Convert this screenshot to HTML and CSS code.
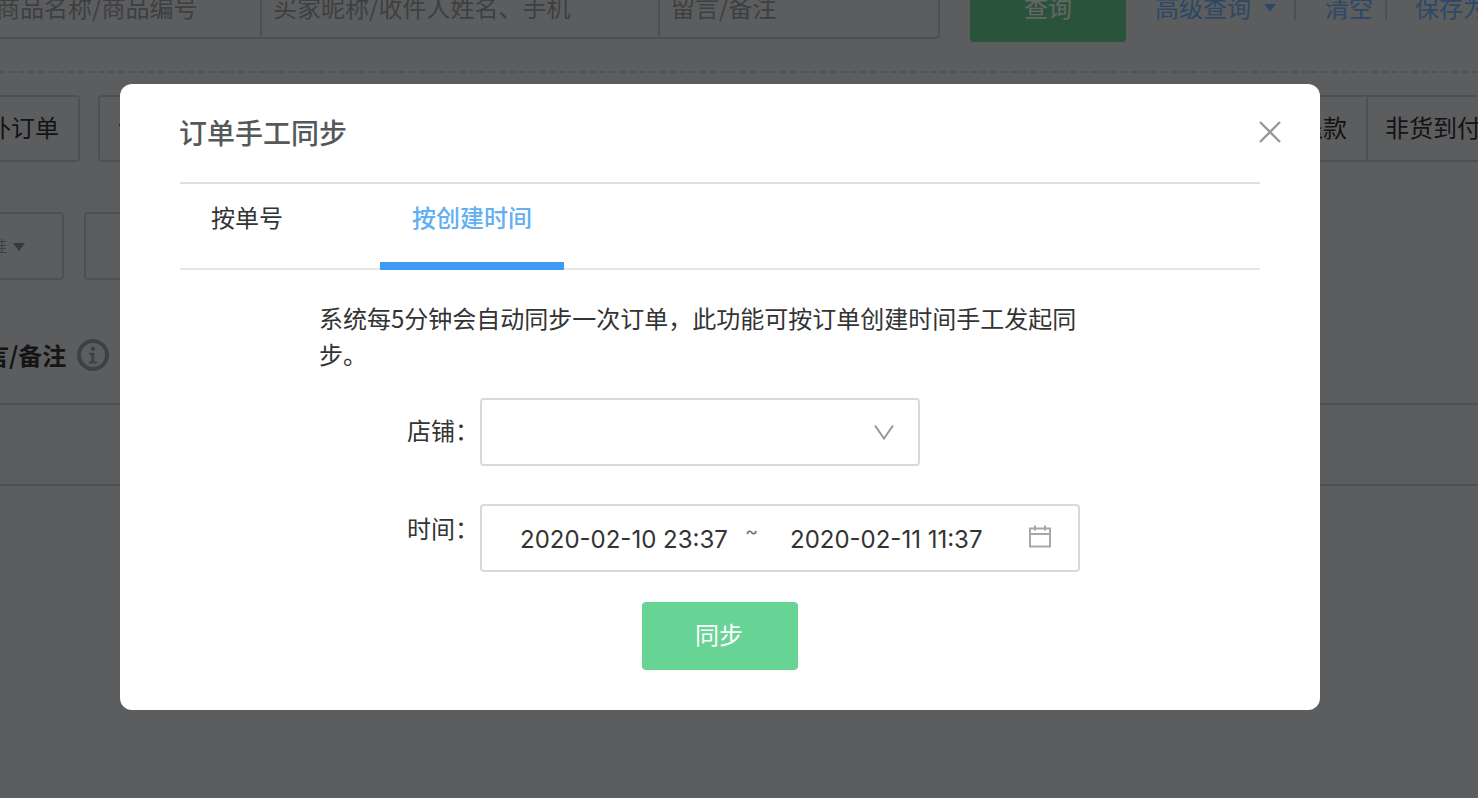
FILE: index.html
```
<!DOCTYPE html>
<html lang="zh-CN">
<head>
<meta charset="utf-8">
<title>订单手工同步</title>
<link rel="stylesheet" href="styles.css">
</head>
<body>
<div class="page">
  <div class="search-row">
    <div class="search-group">
      <div class="search-cell cell-a">商品名称/商品编号</div>
      <div class="search-cell cell-b">买家昵称/收件人姓名、手机</div>
      <div class="search-cell cell-c">留言/备注</div>
    </div>
    <div class="query-btn">查询</div>
    <div class="link-item link-first">高级查询<span class="caret"></span></div>
    <div class="link-item link-mid">清空</div>
    <div class="link-item link-last">保存为</div>
  </div>
  <div class="filter-row">
    <div class="chip chip-a">外订单</div>
    <div class="chip chip-b">订单</div>
    <div class="chip-tail">
      <div class="chip chip-c">退款</div>
      <div class="chip chip-d">非货到付款</div>
    </div>
  </div>
  <div class="select-row">
    <div class="sel sel-a">标准<span class="caret caret-dark"></span></div>
    <div class="sel sel-b"></div>
  </div>
  <div class="head-row">
    <span class="head-text">留言/备注</span>
    <svg class="info" width="32" height="32" viewBox="0 0 32 32"><circle cx="16" cy="16" r="14" fill="none" stroke="#98a2aa" stroke-width="4"/><circle cx="16" cy="9.8" r="2.2" fill="#98a2aa"/><path d="M12.4 13.8h5v8.6h2.4v2.2h-7.8v-2.2h2.4v-6.4h-2z" fill="#98a2aa"/></svg>
  </div>
  <div class="table-row"></div>

  <div class="overlay"></div>
  <div class="modal">
    <div class="modal-head">
      <h2 class="modal-title">订单手工同步</h2>
      <svg class="close" width="22" height="22" viewBox="0 0 22 22"><path d="M1 1l20 20M21 1L1 21" stroke="#97999b" stroke-width="2.4" fill="none"/></svg>
    </div>
    <div class="tabs">
      <div class="tab tab-first">按单号</div>
      <div class="tab tab-active">按创建时间</div>
    </div>
    <div class="modal-body">
      <p class="desc">系统每5分钟会自动同步一次订单，此功能可按订单创建时间手工发起同步。</p>
      <div class="form-row">
        <label class="form-label">店铺：</label>
        <div class="control control-select">
          <svg width="22" height="16" viewBox="0 0 22 16"><path d="M2 1.5L11 14.5 20 1.5" stroke="#97999b" stroke-width="2" fill="none"/></svg>
        </div>
      </div>
      <div class="form-row form-row-time">
        <label class="form-label label-time">时间：</label>
        <div class="control control-time">
          <span class="date date-start">2020-02-10 23:37</span>
          <span class="tilde">~</span>
          <span class="date">2020-02-11 11:37</span>
          <svg class="cal" width="24" height="24" viewBox="0 0 24 24"><path d="M2 4.5h20v18H2zM2 10h20M7 1.5v5M17 1.5v5" stroke="#a5a8aa" stroke-width="2" fill="none"/></svg>
        </div>
      </div>
      <div class="submit">同步</div>
    </div>
  </div>
</div>
</body>
</html>
```
FILE: styles.css
```
* { box-sizing: border-box; }
html, body { margin: 0; height: 100%; overflow: hidden; }
body { font-family: "Noto Sans CJK SC", "Liberation Sans", sans-serif; font-size: 24px; color: #333; background: #fff; }
.page { position: relative; width: 1478px; height: 798px; overflow: hidden; background: #e6e9eb; }

.search-row { display: flex; align-items: flex-start; height: 101px; margin-top: -28px; margin-left: -42px; width: 1600px; border-bottom: 2px dashed #c8ccd0; }
.search-group { display: flex; flex: none; width: 982px; height: 67px; border: 2px solid #c4c9cd; border-radius: 4px; color: #9a9ea2; line-height: 65px; }
.search-cell { padding-left: 11px; border-right: 2px solid #c4c9cd; white-space: nowrap; }
.cell-a { width: 302px; padding-left: 36px; }
.cell-b { width: 398px; }
.cell-c { flex: 1; border-right: 0; }
.query-btn { flex: none; width: 156px; height: 70px; margin-left: 30px; background: #67d395; color: #fff; border-radius: 4px; text-align: center; line-height: 70px; }
.link-item { flex: none; color: #6fb5ff; white-space: nowrap; line-height: 70px; position: relative; }
.link-first { margin-left: 29px; width: 141px; }
.link-mid { margin-left: 29px; width: 60px; }
.link-last { margin-left: 30px; }
.link-first::after, .link-mid::after { content: ""; position: absolute; top: 28px; height: 20px; width: 2px; background: #c4c9cd; right: 0; }
.link-mid::after { right: -2px; }
.caret { display: inline-block; width: 0; height: 0; margin-left: 13px; vertical-align: 5px; border-left: 6px solid transparent; border-right: 6px solid transparent; border-top: 8px solid currentColor; }

.filter-row { display: flex; margin-top: 22px; height: 67px; margin-left: -40px; width: 1558px; }
.chip { height: 67px; border: 2px solid #c4c9cd; border-radius: 4px; line-height: 59px; padding-left: 18px; white-space: nowrap; color: #333; overflow: hidden; }
.chip-a { width: 120px; padding-left: 25px; }
.chip-b { width: 300px; margin-left: 18px; }
.chip-tail { display: flex; margin-left: auto; }
.chip-c { width: 170px; border-right: 0; border-radius: 4px 0 0 4px; padding-left: 101px; }
.chip-d { width: 152px; border-left: 2px solid #c4c9cd; border-radius: 0; padding-left: 17px; border-right: 0; }

.select-row { display: flex; margin-top: 50px; margin-left: -40px; }
.sel { height: 68px; border: 2px solid #c4c9cd; border-radius: 4px; }
.sel-a { width: 104px; color: #9a9ea2; font-size: 16px; line-height: 62px; padding-left: 13px; white-space: nowrap; }
.sel-a .caret { margin-left: 6px; vertical-align: 1px; color: #8a8e92; }
.sel-b { width: 300px; margin-left: 20px; }

.head-row { display: flex; align-items: center; gap: 11px; height: 125px; margin-left: -39px; padding-top: 26px; border-bottom: 2px solid #c4c9cd; }
.head-text { font-weight: 700; color: #333; }
.info { flex: none; }
.table-row { height: 81px; border-bottom: 2px solid #c4c9cd; }

.overlay { position: absolute; inset: 0; background: rgba(0, 0, 0, .6); }

.modal { position: absolute; left: 120px; top: 84px; width: 1200px; height: 626px; padding: 0 60px; background: #fff; border-radius: 12px; }
.modal-head { position: relative; height: 100px; border-bottom: 2px solid #dde1e3; }
.modal-title { margin: 0 0 0 -1px; font-size: 28px; font-weight: 500; line-height: 96px; color: #55585b; }
.close { position: absolute; right: -21px; top: 37px; }
.tabs { display: flex; height: 86px; border-bottom: 2px solid #e4e7e9; }
.tab { height: 86px; padding: 0 32px; line-height: 66px; color: #333; }
.tab-first { padding: 0 33px 0 31px; margin-right: 64px; }
.tab-active { color: #62b0f4; font-weight: 500; border-bottom: 8px solid #3d9bf5; }

.modal-body { padding-left: 140px; }
.desc { width: 770px; margin: 30px 0 26px -1px; line-height: 36px; color: #333; }
.form-row { display: flex; align-items: center; }
.form-row-time { margin-top: 38px; }
.form-label { flex: none; width: 160px; padding-right: 1px; text-align: right; white-space: nowrap; line-height: 36px; color: #333; margin-top: -4px; }
.label-time { align-self: flex-start; margin-top: 6px; }
.control { height: 68px; background: #fff; border: 2px solid #d5dadd; border-radius: 4px; display: flex; align-items: center; }
.control-select { width: 440px; justify-content: flex-end; padding-right: 23px; }
.control-time { width: 600px; position: relative; font-family: Inter, "Liberation Sans", sans-serif; color: #333; padding-left: 38px; }
.date { white-space: nowrap; line-height: 68px; padding-top: 3px; }
.date-start { flex: none; width: 209px; }
.tilde { flex: none; width: 61px; padding-left: 16px; font-size: 20px; color: #777; margin-top: -14px; }
.cal { position: absolute; right: 26px; top: 18px; }
.submit { width: 156px; height: 68px; margin: 30px 0 0 322px; background: #67d395; color: #fff; border-radius: 4px; text-align: center; line-height: 64px; text-indent: -2px; }
```
